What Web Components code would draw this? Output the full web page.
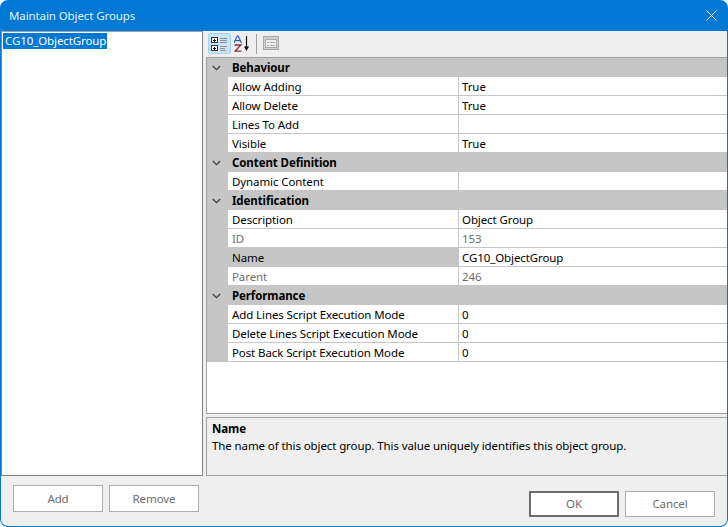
<!DOCTYPE html>
<html>
<head>
<meta charset="utf-8">
<title>Maintain Object Groups</title>
<style>
  html, body { margin: 0; padding: 0; background: #fff; }
  body { font: 11.5px/16px "Noto Sans", "Open Sans", sans-serif; letter-spacing: -0.1px; color: #000; }
</style>
</head>
<body>
<object-dialog>
  <span slot="title">Maintain Object Groups</span>
  <object-list slot="list">
    <span class="item">CG10_ObjectGroup</span>
  </object-list>
  <grid-toolbar slot="toolbar"></grid-toolbar>
  <prop-grid slot="grid">
    <prop-section name="Behaviour">
      <prop-row label="Allow Adding" value="True"></prop-row>
      <prop-row label="Allow Delete" value="True"></prop-row>
      <prop-row label="Lines To Add" value=""></prop-row>
      <prop-row label="Visible" value="True"></prop-row>
    </prop-section>
    <prop-section name="Content Definition">
      <prop-row label="Dynamic Content" value=""></prop-row>
    </prop-section>
    <prop-section name="Identification">
      <prop-row label="Description" value="Object Group"></prop-row>
      <prop-row label="ID" value="153" disabled></prop-row>
      <prop-row label="Name" value="CG10_ObjectGroup" selected></prop-row>
      <prop-row label="Parent" value="246" disabled></prop-row>
    </prop-section>
    <prop-section name="Performance">
      <prop-row label="Add Lines Script Execution Mode" value="0"></prop-row>
      <prop-row label="Delete Lines Script Execution Mode" value="0"></prop-row>
      <prop-row label="Post Back Script Execution Mode" value="0"></prop-row>
    </prop-section>
  </prop-grid>
  <help-panel slot="help" heading="Name">The name of this object group. This value uniquely identifies this object group.</help-panel>
  <dialog-button slot="left-buttons" tall>Add</dialog-button>
  <dialog-button slot="left-buttons" tall>Remove</dialog-button>
  <dialog-button slot="right-buttons" default>OK</dialog-button>
  <dialog-button slot="right-buttons">Cancel</dialog-button>
</object-dialog>

<script>
class ObjectDialog extends HTMLElement {
  constructor() {
    super();
    this.attachShadow({ mode: 'open' }).innerHTML = `
      <style>
        :host { display: block; width: 728px; height: 527px; background: #0078d4; border-radius: 8px; }
        .window { box-sizing: border-box; width: 728px; height: 527px; display: flex; flex-direction: column; padding: 0 1px 1px 1px; }
        .title { flex: none; height: 31px; display: flex; align-items: center; justify-content: space-between; padding: 0 8px; color: #e4f1fb; }
        .close { width: 11px; height: 11px; margin-right: 2px; }
        .body { flex: none; height: 495px; display: flex; flex-direction: column; background: #efefef; border-radius: 0 0 7px 7px; }
        .main { flex: none; height: 445px; display: flex; gap: 3px; }
        .left { flex: none; width: 202px; }
        .right { flex: 1; min-width: 0; display: flex; flex-direction: column; }
        .help { margin-top: 3px; }
        .footer { flex: none; height: 50px; display: flex; justify-content: space-between; padding: 0 12px; }
        .group { display: flex; gap: 6px; align-items: flex-start; }
        .group.l { padding-top: 9px; }
        .group.r { padding-top: 15px; }
      </style>
      <div class="window">
        <div class="title">
          <slot name="title"></slot>
          <svg class="close" viewBox="0 0 11 11"><path d="M.5.5l10 10M10.5.5l-10 10" stroke="#fff" stroke-width="1" fill="none"/></svg>
        </div>
        <div class="body">
          <div class="main">
            <div class="left"><slot name="list"></slot></div>
            <div class="right">
              <slot name="toolbar"></slot>
              <slot name="grid"></slot>
              <div class="help"><slot name="help"></slot></div>
            </div>
          </div>
          <div class="footer">
            <div class="group l"><slot name="left-buttons"></slot></div>
            <div class="group r"><slot name="right-buttons"></slot></div>
          </div>
        </div>
      </div>`;
  }
}

class ObjectList extends HTMLElement {
  constructor() {
    super();
    this.attachShadow({ mode: 'open' }).innerHTML = `
      <style>
        :host { display: block; box-sizing: border-box; height: 445px; background: #fff; border: 1px solid #82828c; border-top-color: #a0a0a0; padding: 1px 0 0 1px; }
        .sel { display: inline-block; background: #0078d4; color: #fff; height: 16px; line-height: 15px; padding: 0 1px 0 2px; }
      </style>
      <span class="sel">${this.querySelector('.item').textContent}</span>`;
  }
}

class GridToolbar extends HTMLElement {
  constructor() {
    super();
    this.attachShadow({ mode: 'open' }).innerHTML = `
      <style>
        :host { display: flex; box-sizing: border-box; height: 26px; align-items: center; padding: 0 0 1px 2px; }
        .btn { width: 23px; height: 21px; box-sizing: border-box; display: flex; align-items: center; justify-content: center; }
        .on { background: #cce4f7; border: 1px solid #99d1ff; border-radius: 3px; }
        .sep { width: 1px; height: 20px; background: #a0a0a0; margin: 0 2px; }
        svg { display: block; }
        .form { margin-left: 2px; }
      </style>
      <div class="btn on">
        <svg width="17" height="16" viewBox="0 0 17 16" shape-rendering="crispEdges">
          <path fill="#fff" stroke="#333" d="M.5 1.5h6v5h-6zM.5 9.5h6v5h-6z"/>
          <path stroke="#111" d="M2 4h3M3.5 2.5v3M2 12h3M3.5 10.5v3"/>
          <path stroke="#8a8f96" d="M9 2h7M9 4h7M9 6h7M9 10h7M9 12h5M9 14h6"/>
        </svg>
      </div>
      <div class="btn">
        <svg width="17" height="17" viewBox="0 0 17 17">
          <path d="M0 8 3.2 1h1L7.4 8M1.200 5.600h5" stroke="#2b5fb8" stroke-width="1.2" fill="none"/>
          <path d="M.5 10h6.500L1 16.200h6.500" stroke="#8c2f3f" stroke-width="1.300" fill="none"/>
          <path d="M12.500 1v13" stroke="#111" stroke-width="1.200"/>
          <path d="M10 11.500h5L12.500 16z" fill="#111"/>
        </svg>
      </div>
      <div class="sep"></div>
      <div class="btn">
        <svg class="form" width="17" height="15" viewBox="0 0 17 15" shape-rendering="crispEdges">
          <path fill="#d0d0d0" stroke="#a8a8a8" d="M.5.5h15v13h-15z"/>
          <path fill="#eee" stroke="#a8a8a8" d="M2.500 3.500h11v8h-11z"/>
          <path stroke="#a8a8a8" d="M4 6h2M7 6h5M4 9h2M7 9h5"/>
        </svg>
      </div>`;
  }
}

class PropGrid extends HTMLElement {
  constructor() {
    super();
    this.attachShadow({ mode: 'open' }).innerHTML = `
      <style>
        :host { display: block; box-sizing: border-box; height: 357px; background: #fff; border: 1px solid #a0a0a0; border-right: 0; }
      </style>
      <slot></slot>`;
  }
}

class PropSection extends HTMLElement {
  constructor() {
    super();
    this.attachShadow({ mode: 'open' }).innerHTML = `
      <style>
        :host { display: block; }
        .head { height: 19px; background: #c6c6c6; display: flex; align-items: center; font-weight: 700; }
        .chev { width: 25px; flex: none; display: flex; justify-content: center; padding-right: 7px; box-sizing: border-box; }
      </style>
      <div class="head">
        <div class="chev"><svg width="9" height="6" viewBox="0 0 9 6"><path d="M.8 1 4.500 4.700 8.200 1" stroke="#404040" stroke-width="1.300" fill="none"/></svg></div>
        <span>${this.getAttribute('name')}</span>
      </div>
      <slot></slot>`;
  }
}

class PropRow extends HTMLElement {
  constructor() {
    super();
    const disabled = this.hasAttribute('disabled');
    const selected = this.hasAttribute('selected');
    this.attachShadow({ mode: 'open' }).innerHTML = `
      <style>
        :host { display: flex; height: 19px; background: #c6c6c6; }
        .label, .value { box-sizing: border-box; height: 19px; line-height: 20px; border-bottom: 1px solid #c6c6c6; white-space: nowrap; overflow: hidden; }
        .label { flex: none; width: 231px; margin-left: 21px; padding-left: 4px; border-right: 1px solid #c6c6c6; background: ${selected ? '#c6c6c6' : '#fff'}; color: ${disabled ? '#6d6d6d' : '#000'}; }
        .value { flex: 1; padding-left: 3px; background: #fff; color: ${disabled ? '#6d6d6d' : '#000'}; }
      </style>
      <div class="label">${this.getAttribute('label')}</div>
      <div class="value">${this.getAttribute('value')}</div>`;
  }
}

class HelpPanel extends HTMLElement {
  constructor() {
    super();
    this.attachShadow({ mode: 'open' }).innerHTML = `
      <style>
        :host { display: block; box-sizing: border-box; height: 59px; border: 1px solid #a0a0a0; border-right: 0; padding: 2px 5px; background: #efefef; }
        .h { font-weight: 700; height: 18px; line-height: 18px; }
      </style>
      <div class="h">${this.getAttribute('heading')}</div>
      <slot></slot>`;
  }
}

class DialogButton extends HTMLElement {
  constructor() {
    super();
    const isDefault = this.hasAttribute('default');
    const h = this.hasAttribute('tall') ? 27 : 26;
    this.attachShadow({ mode: 'open' }).innerHTML = `
      <style>
        :host { display: block; }
        .b { box-sizing: border-box; width: 90px; height: ${h}px; background: #fff; border: ${isDefault ? '2px solid #6d6d6d' : '1px solid #adadad'}; display: flex; align-items: center; justify-content: center; color: #6d6d6d; }
      </style>
      <div class="b"><slot></slot></div>`;
  }
}

customElements.define('object-dialog', ObjectDialog);
customElements.define('object-list', ObjectList);
customElements.define('grid-toolbar', GridToolbar);
customElements.define('prop-grid', PropGrid);
customElements.define('prop-section', PropSection);
customElements.define('prop-row', PropRow);
customElements.define('help-panel', HelpPanel);
customElements.define('dialog-button', DialogButton);
</script>
</body>
</html>
